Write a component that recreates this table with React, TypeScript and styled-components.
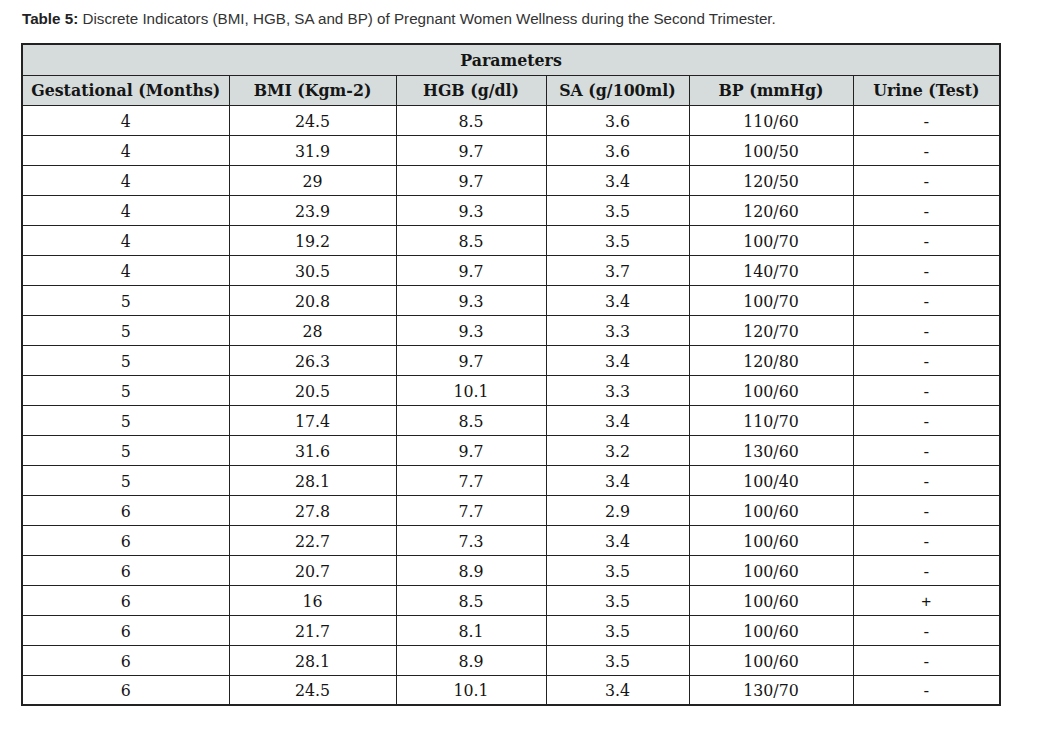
import React from 'react';
import styled, { createGlobalStyle } from 'styled-components';

const GlobalStyle = createGlobalStyle`
  html, body {
    margin: 0;
    padding: 0;
    background: #fff;
  }
`;

const Page = styled.div`
  padding: 8px 0 0 21px;
  width: 978px;
`;

const Caption = styled.p`
  margin: 0 0 0 1px;
  font-family: 'Liberation Sans', Arial, sans-serif;
  font-size: 15.2px;
  line-height: 21px;
  color: #333;

  strong {
    font-weight: bold;
    color: #222;
  }
`;

const Table = styled.table`
  margin-top: 14px;
  width: 978px;
  border-collapse: collapse;
  table-layout: fixed;
  font-family: 'DejaVu Serif', 'Liberation Serif', serif;
  color: #151515;
  border: 2px solid #222;
`;

const Row = styled.tr<{ $first?: boolean }>`
  height: ${p => (p.$first ? 31 : 30)}px;
`;

const HeadCell = styled.th`
  background: #d6dcdc;
  border: 1px solid #222;
  font-weight: bold;
  font-size: 15.8px;
  line-height: 18px;
  padding: 2px 0 0;
  text-align: center;
  vertical-align: middle;
`;

const Cell = styled.td`
  border: 1px solid #222;
  padding: 3px 0 0;
  line-height: 18px;
  text-align: center;
  vertical-align: middle;
  font-size: 15.8px;
`;

const Mark = styled.span`
  font-family: 'Liberation Sans', Arial, sans-serif;
  font-size: 17px;
`;

const widths = [207, 167, 150, 143, 164, 147];

const columns = [
  'Gestational (Months)',
  'BMI (Kgm-2)',
  'HGB (g/dl)',
  'SA (g/100ml)',
  'BP (mmHg)',
  'Urine (Test)',
];

const rows: string[][] = [
  ['4', '24.5', '8.5', '3.6', '110/60', '-'],
  ['4', '31.9', '9.7', '3.6', '100/50', '-'],
  ['4', '29', '9.7', '3.4', '120/50', '-'],
  ['4', '23.9', '9.3', '3.5', '120/60', '-'],
  ['4', '19.2', '8.5', '3.5', '100/70', '-'],
  ['4', '30.5', '9.7', '3.7', '140/70', '-'],
  ['5', '20.8', '9.3', '3.4', '100/70', '-'],
  ['5', '28', '9.3', '3.3', '120/70', '-'],
  ['5', '26.3', '9.7', '3.4', '120/80', '-'],
  ['5', '20.5', '10.1', '3.3', '100/60', '-'],
  ['5', '17.4', '8.5', '3.4', '110/70', '-'],
  ['5', '31.6', '9.7', '3.2', '130/60', '-'],
  ['5', '28.1', '7.7', '3.4', '100/40', '-'],
  ['6', '27.8', '7.7', '2.9', '100/60', '-'],
  ['6', '22.7', '7.3', '3.4', '100/60', '-'],
  ['6', '20.7', '8.9', '3.5', '100/60', '-'],
  ['6', '16', '8.5', '3.5', '100/60', '+'],
  ['6', '21.7', '8.1', '3.5', '100/60', '-'],
  ['6', '28.1', '8.9', '3.5', '100/60', '-'],
  ['6', '24.5', '10.1', '3.4', '130/70', '-'],
];

const App: React.FC = () => {
  return (
    <Page>
      <GlobalStyle />
      <Caption>
        <strong>Table 5:</strong> Discrete Indicators (BMI, HGB, SA and BP) of Pregnant Women
        Wellness during the Second Trimester.
      </Caption>
      <Table>
        <colgroup>
          {widths.map((w, i) => (
            <col key={i} style={{ width: w }} />
          ))}
        </colgroup>
        <thead>
          <Row $first>
            <HeadCell colSpan={6}>Parameters</HeadCell>
          </Row>
          <Row>
            {columns.map(c => (
              <HeadCell key={c}>{c}</HeadCell>
            ))}
          </Row>
        </thead>
        <tbody>
          {rows.map((r, i) => (
            <Row key={i}>
              {r.map((v, j) => (
                <Cell key={j}>{j === 5 ? <Mark>{v}</Mark> : v}</Cell>
              ))}
            </Row>
          ))}
        </tbody>
      </Table>
    </Page>
  );
};

export default App;
